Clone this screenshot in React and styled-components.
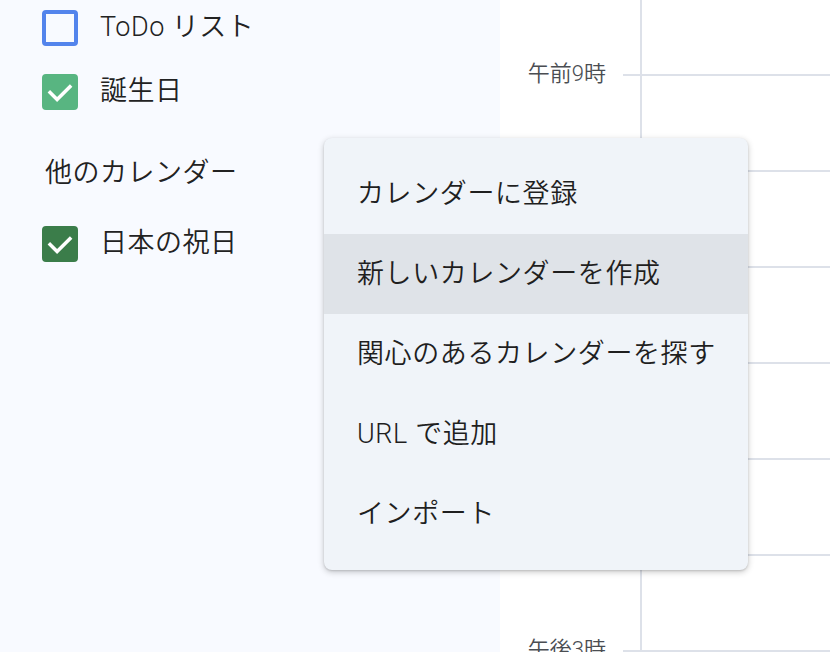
import styled, { createGlobalStyle } from "styled-components";

const GlobalStyle = createGlobalStyle`
  html, body {
    margin: 0;
    padding: 0;
    background: #ffffff;
  }
  body {
    font-family: Roboto, "Noto Sans CJK JP", sans-serif;
    color: #1f1f1f;
    overflow: hidden;
  }
`;

const hours = ["午前9時", "午前10時", "午前11時", "午後12時", "午後1時", "午後2時", "午後3時"];

const menuItems = [
  "カレンダーに登録",
  "新しいカレンダーを作成",
  "関心のあるカレンダーを探す",
  "URL で追加",
  "インポート",
];

const CheckIcon = () => (
  <svg width="28" height="28" viewBox="0 0 24 24">
    <polyline
      points="3.5,12.5 9.5,18.5 20.5,7.5"
      fill="none"
      stroke="#ffffff"
      strokeWidth="3"
      strokeLinecap="square"
    />
  </svg>
);

const App = () => {
  return (
    <>
      <GlobalStyle />
      <Page>
        <Sidebar>
          <CalendarRow $first>
            <Box $color="#5384ec" />
            <Label>ToDo リスト</Label>
          </CalendarRow>
          <CalendarRow>
            <Box $color="#58b581" $checked>
              <CheckIcon />
            </Box>
            <Label>誕生日</Label>
          </CalendarRow>
          <SectionTitle>他のカレンダー</SectionTitle>
          <CalendarRow $after>
            <Box $color="#3b7d4a" $checked>
              <CheckIcon />
            </Box>
            <Label>日本の祝日</Label>
          </CalendarRow>
        </Sidebar>

        <Main>
          <Gutter>
            {hours.map((h) => (
              <GutterSlot key={h}>
                <HourLabel>{h}</HourLabel>
                <Tick />
              </GutterSlot>
            ))}
          </Gutter>
          <DayColumn>
            {hours.map((h) => (
              <HourSlot key={h} />
            ))}
          </DayColumn>
        </Main>

        <Menu>
          {menuItems.map((item, i) => (
            <MenuItem key={item} $active={i === 1}>
              {item}
            </MenuItem>
          ))}
        </Menu>
      </Page>
    </>
  );
};

export default App;

const Page = styled.div`
  position: relative;
  display: flex;
  width: 830px;
  height: 652px;
  overflow: hidden;
`;

const Sidebar = styled.div`
  width: 500px;
  flex-shrink: 0;
  background: #f8faff;
  display: flex;
  flex-direction: column;
`;

const CalendarRow = styled.div`
  display: flex;
  align-items: center;
  gap: 22px;
  height: 64px;
  padding-left: 42px;
  margin-top: ${(p) => (p.$first ? "-4px" : p.$after ? "16px" : "0")};
`;

const Box = styled.div`
  width: 36px;
  height: 36px;
  box-sizing: border-box;
  border-radius: 4px;
  border: 4px solid ${(p) => p.$color};
  background: ${(p) => (p.$checked ? p.$color : "transparent")};
  display: flex;
  align-items: center;
  justify-content: center;
`;

const Label = styled.span`
  font-size: 27px;
  font-weight: 350;
  letter-spacing: 0.5px;
  color: #222222;
  line-height: 1;
  padding-bottom: 2px;
`;

const SectionTitle = styled.div`
  margin-top: 24px;
  height: 48px;
  display: flex;
  align-items: center;
  padding-left: 45px;
  padding-bottom: 3px;
  box-sizing: border-box;
  font-size: 27px;
  font-weight: 350;
  letter-spacing: 0.5px;
  color: #222222;
`;

const Main = styled.div`
  flex: 1;
  display: flex;
  background: #ffffff;
`;

const Gutter = styled.div`
  width: 140px;
  padding-top: 75px;
  flex-shrink: 0;
`;

const GutterSlot = styled.div`
  height: 96px;
  display: flex;
  align-items: flex-start;
  justify-content: flex-end;
`;

const HourLabel = styled.span`
  margin-top: -15px;
  margin-right: 17px;
  line-height: 28px;
  font-size: 22px;
  font-weight: 350;
  color: #4a4d52;
  white-space: nowrap;
`;

const Tick = styled.div`
  width: 17px;
  height: 2px;
  margin-top: -1px;
  background: #dde1e9;
`;

const DayColumn = styled.div`
  flex: 1;
  padding-top: 74px;
  border-left: 2px solid #dde1e9;
`;

const HourSlot = styled.div`
  height: 94px;
  border-top: 2px solid #dde1e9;
`;

const Menu = styled.div`
  position: absolute;
  left: 324px;
  top: 138px;
  width: 424px;
  padding: 16px 0;
  background: #f0f4f9;
  border-radius: 8px;
  box-shadow: 0 2px 6px rgba(0, 0, 0, 0.22), 0 1px 2px rgba(0, 0, 0, 0.12);
`;

const MenuItem = styled.div`
  height: 80px;
  box-sizing: border-box;
  display: flex;
  align-items: center;
  padding: 0 0 5px 33px;
  font-size: 27px;
  font-weight: 350;
  letter-spacing: 0.6px;
  color: #1f1f1f;
  background: ${(p) => (p.$active ? "#dfe3e8" : "transparent")};
  white-space: nowrap;
`;
